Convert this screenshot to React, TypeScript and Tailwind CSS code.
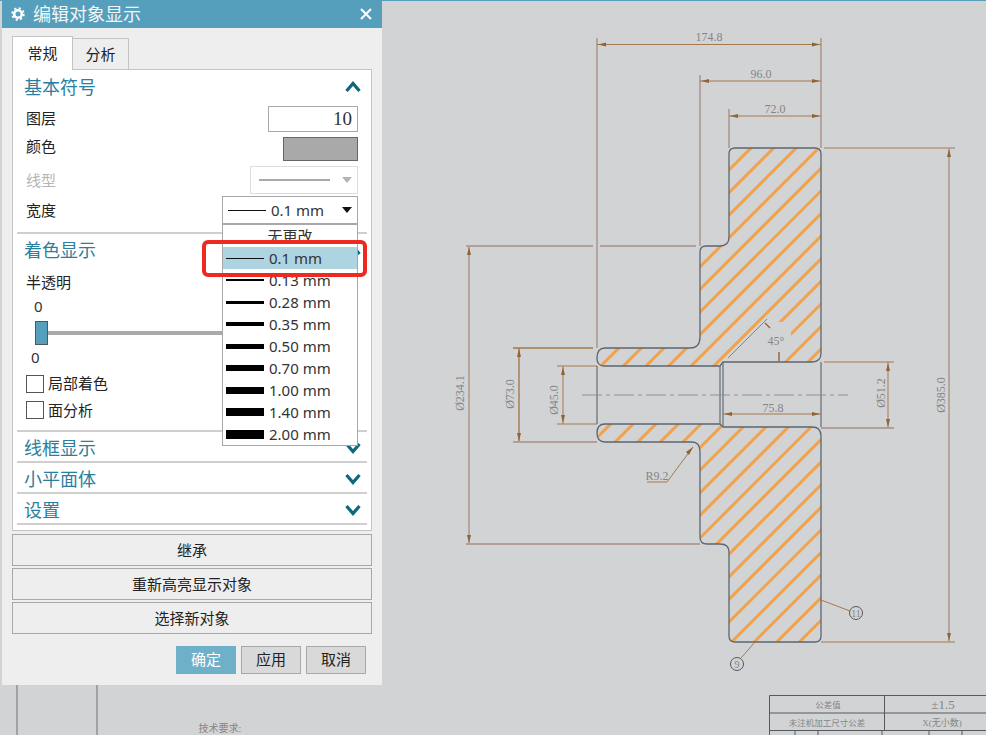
import React from "react";

const widths = [
  { label: "0.13 mm", h: 2 },
  { label: "0.28 mm", h: 3 },
  { label: "0.35 mm", h: 4 },
  { label: "0.50 mm", h: 5 },
  { label: "0.70 mm", h: 6 },
  { label: "1.00 mm", h: 7 },
  { label: "1.40 mm", h: 8 },
  { label: "2.00 mm", h: 9 },
];

const upperPart =
  "M735 148 H815 Q821 148 821 154 V353 Q821 362 812 362 H723 L720 366 H604 Q597 366 597 358 Q597 348 605 348 H690 Q700 348 700 337 V252 Q700 246 706 246 H720 Q729 246 729 237 V154 Q729 148 735 148 Z";
const lowerPart =
  "M605 424 H720 L723 427 H812 Q821 427 821 436 V636 Q821 642 815 642 H735 Q729 642 729 636 V552 Q729 544 720 544 H707 Q700 544 700 537 V452 Q700 442 692 442 H605 Q597 442 597 433 Q597 424 605 424 Z";

const hatchOffsets = Array.from({ length: 26 }, (_, i) => 899 + i * 22.6);

const Chevron = ({ up = false }: { up?: boolean }) => (
  <svg width="16" height="12" viewBox="0 0 16 12" className="shrink-0">
    <path
      d={up ? "M1.5 10 L8 2.5 L14.5 10" : "M1.5 2 L8 9.5 L14.5 2"}
      fill="none"
      stroke="#0f667f"
      strokeWidth="3.2"
    />
  </svg>
);

const Caret = ({ color = "#111111" }: { color?: string }) => (
  <svg width="10" height="6" viewBox="0 0 10 6">
    <path d="M0 0 H10 L5 6 Z" fill={color} />
  </svg>
);

const SectionHeader = ({
  title,
  up = false,
  className,
}: {
  title: string;
  up?: boolean;
  className: string;
}) => (
  <div className={`flex items-center justify-between pl-[7px] pr-[6px] ${className}`}>
    <span className="text-[18px] leading-[24px] text-[#2b7f9e]">{title}</span>
    <Chevron up={up} />
  </div>
);

const Divider = () => <div className="h-[2px] bg-[#cfcfcf]" />;

const Row = ({
  label,
  muted = false,
  labelClass = "",
  className,
  children,
}: {
  label: string;
  muted?: boolean;
  labelClass?: string;
  className: string;
  children: React.ReactNode;
}) => (
  <div className={`flex items-center justify-between pl-[9px] pr-[9px] ${className}`}>
    <span className={`text-[15px] ${muted ? "text-[#b5b5b5]" : "text-[#222222]"} ${labelClass}`}>{label}</span>
    {children}
  </div>
);

const WideButton = ({ label }: { label: string }) => (
  <button className="h-[32px] w-full border border-[#a8a8a8] bg-[#eeeeee] text-[15px] text-[#222222]">
    {label}
  </button>
);

const Check = ({ label, className, labelClass = "" }: { label: string; className: string; labelClass?: string }) => (
  <div className={`flex h-[18px] items-center gap-[4px] pl-[9px] ${className}`}>
    <span className="h-[18px] w-[18px] border border-[#555555] bg-white" />
    <span className={`text-[15px] text-[#222222] ${labelClass}`}>{label}</span>
  </div>
);

const WidthList = () => (
  <div className="absolute left-[220px] top-[224px] z-10 flex h-[222px] w-[136px] flex-col border border-[#a8a8a8] bg-white">
    <div className="flex h-[22px] items-center justify-center text-[15px] text-[#333333]">无更改</div>
    <div className="flex h-[22px] items-center bg-[#aed4e1] pl-[3px]">
      <span className="h-px w-[38px] bg-[#111111]" />
      <span className="ml-[5px] text-[15px] text-[#333333]">0.1 mm</span>
    </div>
    {widths.map((w) => (
      <div key={w.label} className="flex h-[22px] items-center pl-[3px]">
        <span className="w-[38px] bg-black" style={{ height: w.h }} />
        <span className="ml-[5px] text-[15px] text-[#333333]">{w.label}</span>
      </div>
    ))}
  </div>
);

const Dialog = () => (
  <div className="relative z-10 ml-[2px] flex h-[685px] w-[380px] flex-col bg-[#eeeeee]">
    <div className="flex h-[28px] items-center justify-between bg-[#559fbc] pl-[9px] pr-[10px]">
      <div className="flex items-center gap-[8px]">
        <svg width="14" height="14" viewBox="0 0 14 14">
          <circle cx="7" cy="7" r="3.8" fill="none" stroke="#ffffff" strokeWidth="2.6" />
          <circle cx="7" cy="7" r="5.8" fill="none" stroke="#ffffff" strokeWidth="1.8" strokeDasharray="2.2 2.35" />
        </svg>
        <span className="text-[18px] leading-[24px] text-[#f2f6f8]">编辑对象显示</span>
      </div>
      <svg width="12" height="12" viewBox="0 0 12 12">
        <path d="M1 1 L11 11 M11 1 L1 11" stroke="#ffffff" strokeWidth="2" />
      </svg>
    </div>

    <div className="flex flex-1 flex-col px-[10px]">
      <div className="relative z-10 -mb-px mt-[8px] flex h-[34px] items-end">
        <div className="flex h-[34px] w-[61px] items-center justify-center border border-b-0 border-[#c4c4c4] bg-white text-[15px] text-[#222222]">
          常规
        </div>
        <div className="flex h-[32px] w-[56px] items-center justify-center border border-l-0 border-[#c4c4c4] bg-[#eeeeee] text-[15px] text-[#222222]">
          分析
        </div>
      </div>

      <div className="flex h-[462px] flex-col border border-[#c4c4c4] bg-white px-[4px]">
        <SectionHeader title="基本符号" up className="h-[35px] pb-[2px]" />
        <Row label="图层" labelClass="pb-[2px]" className="mt-px h-[26px]">
          <div className="flex h-[26px] w-[90px] items-center justify-end border border-[#aaaaaa] pr-[5px] font-['Liberation_Serif',serif] text-[19px] text-[#333333]">
            10
          </div>
        </Row>
        <Row label="颜色" labelClass="pb-[6px]" className="mt-[5px] h-[24px]">
          <div className="h-[24px] w-[75px] border border-[#666666] bg-[#a9a9a9]" />
        </Row>
        <Row label="线型" muted className="mt-[5px] h-[28px]">
          <div className="flex h-[28px] w-[108px] items-center border border-[#dddddd] pl-[8px]">
            <span className="h-[2px] w-[71px] bg-[#aaaaaa]" />
            <span className="ml-[12px] flex">
              <Caret color="#b5b5b5" />
            </span>
          </div>
        </Row>
        <Row label="宽度" className="mt-[2px] h-[28px]">
          <div className="flex h-[28px] w-[136px] items-center border border-[#a8a8a8] pl-[5px]">
            <span className="h-px w-[38px] bg-[#111111]" />
            <span className="ml-[5px] text-[15px] text-[#333333]">0.1 mm</span>
            <span className="ml-[18px] flex">
              <Caret />
            </span>
          </div>
        </Row>
        <div className="mt-[8px]">
          <Divider />
        </div>

        <SectionHeader title="着色显示" up className="h-[34px] pb-[2px]" />
        <div className="mt-[5px] h-[18px] pl-[9px] text-[15px] leading-[18px] text-[#222222]">半透明</div>
        <div className="mt-[7px] h-[16px] pl-[17px] text-[15px] leading-[16px] text-[#333333]">0</div>
        <div className="mt-[7px] flex h-[24px] items-center pl-[18px]">
          <span className="h-[24px] w-[13px] border border-[#555555] bg-[#559fbc]" />
          <span className="h-[4px] w-[300px] bg-[#aaaaaa]" />
        </div>
        <div className="mt-[4px] h-[16px] pl-[14px] text-[15px] leading-[16px] text-[#333333]">0</div>
        <Check label="局部着色" labelClass="pb-[2px]" className="mt-[10px]" />
        <Check label="面分析" className="mt-[8px]" />
        <div className="mt-[11px]">
          <Divider />
        </div>

        <SectionHeader title="线框显示" className="h-[29px] pt-[3px]" />
        <Divider />
        <SectionHeader title="小平面体" className="h-[29px] pt-[3px]" />
        <Divider />
        <SectionHeader title="设置" className="h-[29px] pt-[3px]" />
        <Divider />
      </div>

      <div className="mt-[3px] flex flex-col gap-[2px]">
        <WideButton label="继承" />
        <WideButton label="重新高亮显示对象" />
        <WideButton label="选择新对象" />
      </div>

      <div className="mt-[12px] flex justify-end gap-[5px] pr-[6px]">
        <button className="h-[28px] w-[60px] bg-[#6fb0c9] pb-[2px] text-[15px] text-white">确定</button>
        <button className="h-[28px] w-[60px] border border-[#a8a8a8] bg-[#d9d9d9] pb-[2px] text-[15px] text-[#222222]">应用</button>
        <button className="h-[28px] w-[60px] border border-[#a8a8a8] bg-[#d9d9d9] pb-[2px] text-[15px] text-[#222222]">取消</button>
      </div>
    </div>

    <WidthList />
    {/* red box drawn on the screenshot */}
    <div className="absolute left-[200px] top-[240px] z-20 h-[37px] w-[165px] rounded-[6px] border-4 border-[#ee2a20]" />
  </div>
);

const Label = ({
  x,
  y,
  rotate = false,
  size = 12,
  children,
}: {
  x: number;
  y: number;
  rotate?: boolean;
  size?: number;
  children: React.ReactNode;
}) => (
  <text
    x={x}
    y={y}
    textAnchor="middle"
    dominantBaseline="central"
    fontSize={size}
    fill="#858585"
    className="font-['Liberation_Serif','Noto_Sans_CJK_SC',serif]"
    transform={rotate ? `rotate(-90 ${x} ${y})` : undefined}
  >
    {children}
  </text>
);

const Arrow = ({ x, y, dir }: { x: number; y: number; dir: "l" | "r" | "u" | "d" }) => {
  const pts = {
    l: `${x},${y} ${x + 8},${y - 2} ${x + 8},${y + 2}`,
    r: `${x},${y} ${x - 8},${y - 2} ${x - 8},${y + 2}`,
    u: `${x},${y} ${x - 2},${y + 8} ${x + 2},${y + 8}`,
    d: `${x},${y} ${x - 2},${y - 8} ${x + 2},${y - 8}`,
  }[dir];
  return <polygon points={pts} fill="#8f6436" />;
};

const Ext = ({ d, w = 1.8 }: { d: string; w?: number }) => (
  <path d={d} fill="none" stroke="#b39f9a" strokeWidth={w} />
);
const Dim = ({ d, w = 1.2 }: { d: string; w?: number }) => (
  <path d={d} fill="none" stroke="#a5794f" strokeWidth={w} />
);

const Drawing = () => (
  <svg width="986" height="735" viewBox="0 0 986 735" className="absolute left-0 top-0">
    <defs>
      <clipPath id="section">
        <path d={`${upperPart} ${lowerPart}`} />
      </clipPath>
    </defs>
    <rect x="0" y="0" width="986" height="1" fill="#559fbc" />

    <g clipPath="url(#section)">
      {hatchOffsets.map((c) => (
        <line key={c} x1={c - 140} y1={140} x2={c - 660} y2={660} stroke="#f0a24c" strokeWidth="3" />
      ))}
      <polygon points="729,358 762,322 790,322 792,345 772,362 735,362" fill="#d2d3d5" />
    </g>

    <path d={`${upperPart} ${lowerPart}`} fill="none" stroke="#5c6670" strokeWidth="1.3" />
    <path d="M597 366 V424 M720 366 V424 M723 362 V427 M821 362 V427" stroke="#6c747c" strokeWidth="1.3" fill="none" />
    <path d="M582 395 H848" stroke="#8d9296" strokeWidth="1" strokeDasharray="20 4 4 4" fill="none" />

    {/* top dimensions */}
    <Ext d="M597 38 V348 M821 38 V148 M700 75 V246 M729 109 V148" />
    <Dim d="M597 44.5 H821 M700 81 H821 M729 116 H821" />
    <Arrow x={598} y={44.5} dir="l" />
    <Arrow x={820} y={44.5} dir="r" />
    <Arrow x={701} y={81} dir="l" />
    <Arrow x={820} y={81} dir="r" />
    <Arrow x={730} y={116} dir="l" />
    <Arrow x={820} y={116} dir="r" />
    <Label x={709} y={37}>174.8</Label>
    <Label x={761} y={74}>96.0</Label>
    <Label x={775} y={109}>72.0</Label>

    {/* left dimensions */}
    <Ext d="M466 246 H593 M600 246 H696 M466 544 H700 M469 246 V544" />
    <Arrow x={469} y={247} dir="u" />
    <Arrow x={469} y={543} dir="d" />
    <Label x={460} y={393} rotate>Ø234.1</Label>
    <Dim d="M513 348 H593 M519 348 V442" w={1.4} />
    <Ext d="M513 442 H597" />
    <Arrow x={519} y={349} dir="u" />
    <Arrow x={519} y={441} dir="d" />
    <Label x={510} y={394} rotate>Ø73.0</Label>
    <Dim d="M557 366 H597 M557 424 H597 M563 366 V424" w={1} />
    <Arrow x={563} y={367} dir="u" />
    <Arrow x={563} y={423} dir="d" />
    <Label x={554} y={400} rotate>Ø45.0</Label>

    {/* right dimensions */}
    <Dim d="M824 148 H955 M821 642 H955" w={1} />
    <Ext d="M949 148 V642" />
    <Arrow x={949} y={149} dir="u" />
    <Arrow x={949} y={641} dir="d" />
    <Label x={941} y={395} rotate>Ø385.0</Label>
    <Dim d="M824 362 H894 M888 362 V428" w={1} />
    <Ext d="M821 428 H894" />
    <Arrow x={888} y={363} dir="u" />
    <Arrow x={888} y={427} dir="d" />
    <Label x={881} y={393} rotate>Ø51.2</Label>
    <Dim d="M723 414 H821" w={1} />
    <Arrow x={724} y={414} dir="l" />
    <Arrow x={820} y={414} dir="r" />
    <Label x={773} y={408}>75.8</Label>

    {/* chamfer and notes */}
    <path d="M728 358 L767 319" stroke="#7f8488" strokeWidth="1" fill="none" />
    <path d="M765 323 L770 328 M779 352 V361" stroke="#8f6436" strokeWidth="1.4" fill="none" />
    <Label x={776} y={341}>45°</Label>
    <Dim d="M647 482 H667 L693 447" w={1} />
    <polygon points="693,447 686,452 689,455" fill="#8f6436" />
    <Label x={657} y={476}>R9.2</Label>
    <Dim d="M821 600 L850 611 M755 642 L741 658" w={1} />
    <circle cx="856" cy="613" r="6.5" fill="none" stroke="#55595d" strokeWidth="1" />
    <circle cx="737" cy="664" r="6.5" fill="none" stroke="#55595d" strokeWidth="1" />
    <Label x={856} y={613} size={10}>11</Label>
    <Label x={737} y={664} size={10}>9</Label>

    {/* title block */}
    <path d="M769.5 735 V695.5 H986 M769 713 H986 M769 730.5 H986 M884.5 695 V730 M795 730 V735 M818 730 V735 M882 730 V735 M929 730 V735 M962 730 V735" stroke="#555a5e" strokeWidth="1" fill="none" />
    <Label x={828} y={705} size={8.5}>公差值</Label>
    <Label x={943} y={704} size={13}>±1.5</Label>
    <Label x={827} y={723} size={8.5}>未注机加工尺寸公差</Label>
    <Label x={942} y={723} size={9}>X(无小数)</Label>

    <path d="M17 684 V735 M97 684 V735" stroke="#8b8f93" strokeWidth="1.4" fill="none" />
    <Label x={220} y={728} size={10}>技术要求:</Label>
  </svg>
);

export default function App() {
  return (
    <div className="relative h-[735px] w-[986px] overflow-hidden bg-[#d2d3d5] font-['Noto_Sans','Noto_Sans_CJK_SC',sans-serif]">
      <Drawing />
      <Dialog />
    </div>
  );
}
